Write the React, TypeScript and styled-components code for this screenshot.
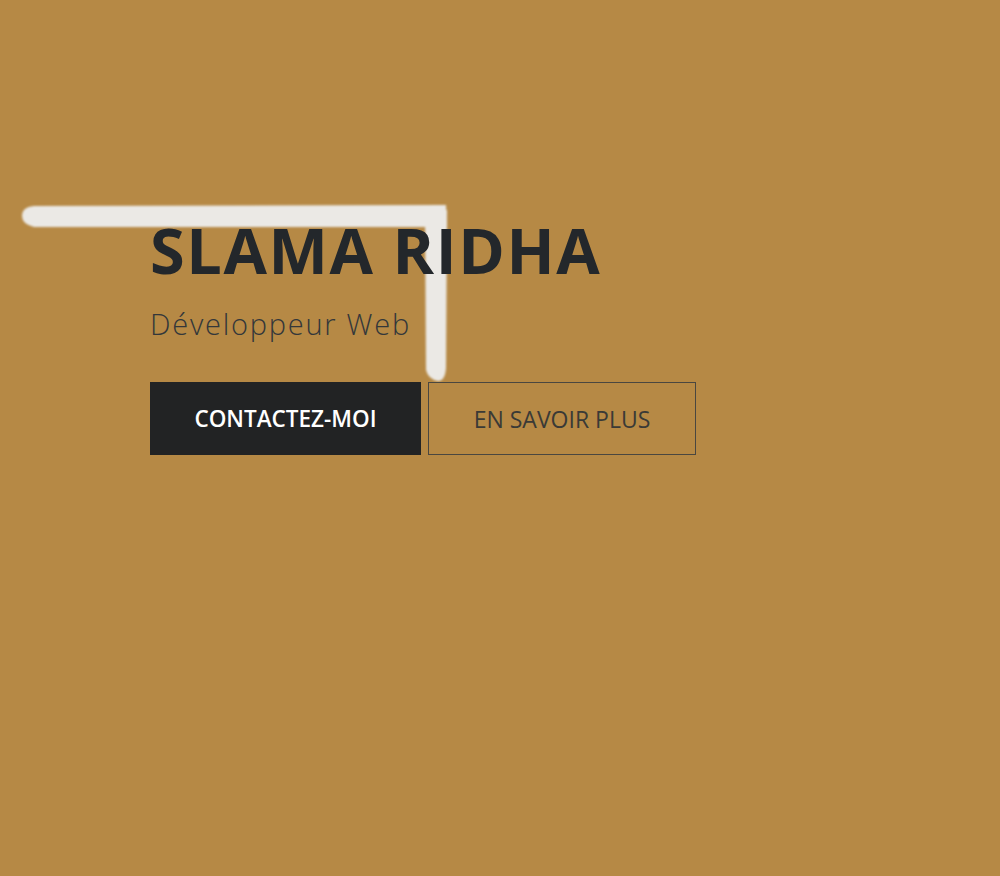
import React from "react";
import styled, { createGlobalStyle } from "styled-components";

const GlobalStyle = createGlobalStyle`
  html, body { margin: 0; padding: 0; }
  body {
    background: #b68945;
    font-family: "Open Sans", "Liberation Sans", sans-serif;
  }
`;

const Hero = styled.section`
  position: relative;
  width: 1000px;
  height: 876px;
  background: #b68945;
  overflow: hidden;
  box-sizing: border-box;
  padding: 218px 0 0 150px;
`;

const Stroke = styled.svg`
  position: absolute;
  left: 0;
  top: 0;
  width: 1000px;
  height: 876px;
  pointer-events: none;
`;

const Content = styled.div`
  position: relative;
  display: flex;
  flex-direction: column;
  align-items: flex-start;
`;

const Title = styled.h1`
  margin: 0;
  font-family: "Open Sans", "Liberation Sans", sans-serif;
  font-weight: 700;
  font-size: 63px;
  line-height: 64px;
  letter-spacing: 1.6px;
  color: #23272b;
`;

const Subtitle = styled.p`
  margin: 22px 0 0;
  font-family: "Open Sans", "Liberation Sans", sans-serif;
  font-weight: 300;
  font-size: 29px;
  line-height: 40px;
  letter-spacing: 1.75px;
  color: #33373a;
`;

const Actions = styled.div`
  display: flex;
  gap: 7px;
  margin-top: 38px;
`;

const Button = styled.a<{ $variant: "solid" | "outline" }>`
  display: flex;
  align-items: center;
  justify-content: center;
  box-sizing: border-box;
  height: 73px;
  width: ${(p) => (p.$variant === "solid" ? "271px" : "268px")};
  font-family: "Open Sans", "Liberation Sans", sans-serif;
  font-size: ${(p) => (p.$variant === "solid" ? "22.5px" : "23px")};
  font-weight: ${(p) => (p.$variant === "solid" ? 600 : 400)};
  text-transform: uppercase;
  text-decoration: none;
  color: ${(p) => (p.$variant === "solid" ? "#ffffff" : "#3a3a36")};
  background: ${(p) => (p.$variant === "solid" ? "#222324" : "transparent")};
  border: 1px solid ${(p) => (p.$variant === "solid" ? "#222324" : "#4a4740")};
`;

export default function App() {
  return (
    <>
      <GlobalStyle />
      <Hero>
        <Stroke viewBox="0 0 1000 876">
          <defs>
            <filter id="soft" x="-5%" y="-5%" width="110%" height="110%">
              <feGaussianBlur stdDeviation="1.2" />
            </filter>
          </defs>
          <g fill="#ebe9e5" filter="url(#soft)">
            <path d="M34 206 L446 205 L447 227 L34 227 Q22 224 22 216 Q22 207 34 206 Z" />
            <path d="M425 210 L447 210 L446 368 Q445 381 438 381 Q428 379 426 370 Z" />
          </g>
        </Stroke>
        <Content>
          <Title>SLAMA RIDHA</Title>
          <Subtitle>Développeur Web</Subtitle>
          <Actions>
            <Button $variant="solid" href="#contact">Contactez-moi</Button>
            <Button $variant="outline" href="#about">En savoir plus</Button>
          </Actions>
        </Content>
      </Hero>
    </>
  );
}
